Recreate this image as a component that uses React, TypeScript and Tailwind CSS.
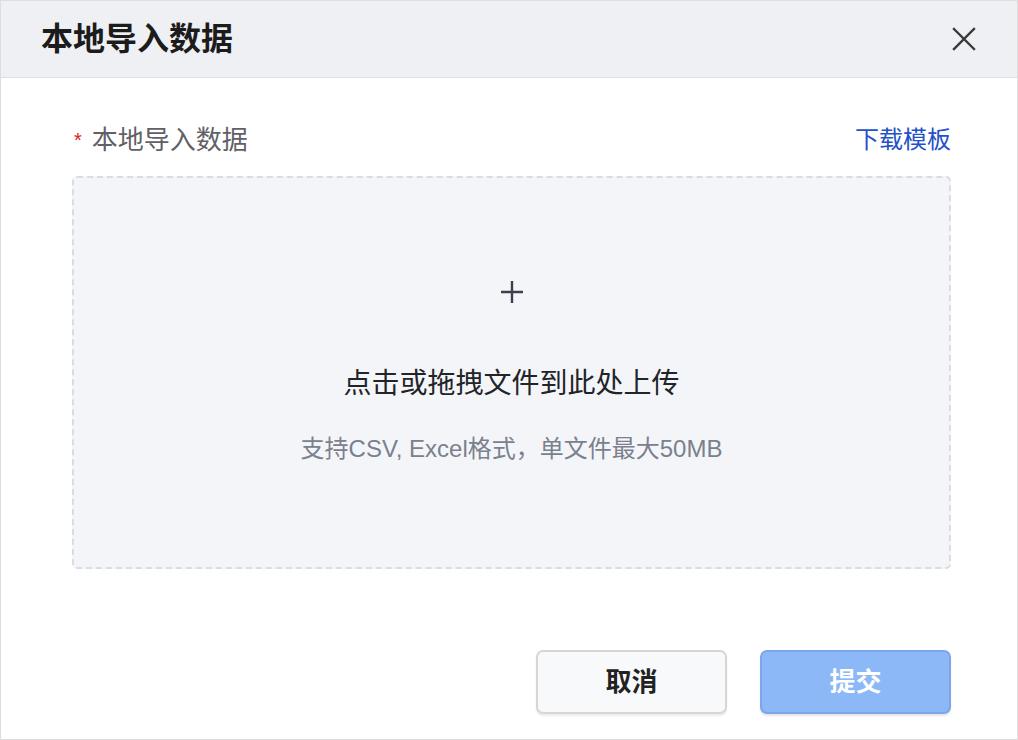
const font = { fontFamily: '"Liberation Sans", "Noto Sans CJK SC", sans-serif' };

export default function App() {
  return (
    <div
      className="w-[1018px] h-[740px] bg-white border border-[#dedede] flex flex-col"
      style={font}
    >
      {/* HEADER */}
      <div className="h-[77px] shrink-0 flex items-center justify-between pl-[40px] pr-[40px] bg-[#eef0f3] border-b border-[#dcdfe4]">
        <h1 className="text-[32px] font-semibold text-[#1c1c1c] leading-none">本地导入数据</h1>
        <button className="w-[26px] h-[26px] flex items-center justify-center text-[#3a3a3a]">
          <svg width="24" height="24" viewBox="0 0 24 24" fill="none" stroke="currentColor" strokeWidth="2.4" strokeLinecap="square">
            <path d="M2 2 L22 22 M22 2 L2 22" />
          </svg>
        </button>
      </div>

      {/* BODY */}
      <div className="flex-1 flex flex-col pl-[71px] pr-[66px] pt-[44px]">
        <div className="flex items-center justify-between h-[36px]">
          <div className="flex items-center pl-[2px]">
            <span className="text-[#e02020] text-[20px] mr-[10px] leading-none">*</span>
            <span className="text-[26px] text-[#5f6166] leading-none">本地导入数据</span>
          </div>
          <a href="#" className="text-[24px] text-[#2451c9] leading-none">下载模板</a>
        </div>

        {/* DROP ZONE */}
        <div className="mt-[18px] h-[393px] rounded-[5px] border-2 border-dashed border-[#d9dce3] bg-[#f4f5f9] flex flex-col items-center">
          <svg className="mt-[102px] text-[#3a414d]" width="24" height="24" viewBox="0 0 24 24" fill="none" stroke="currentColor" strokeWidth="2.4">
            <path d="M12 1 V23 M1 12 H23" />
          </svg>
          <div className="mt-[66px] text-[28px] text-[#222428] leading-none">点击或拖拽文件到此处上传</div>
          <div className="mt-[39px] text-[24px] text-[#7a818d] leading-none">支持CSV, Excel格式，单文件最大50MB</div>
        </div>

        {/* FOOTER */}
        <div className="mt-[81px] flex justify-end gap-[33px]">
          <button className="w-[191px] h-[64px] rounded-[7px] border-2 border-[#d6d6d6] bg-[#f8f9fa] shadow-[0_2px_2px_rgba(0,0,0,0.08)] text-[26px] font-semibold text-[#222]">
            取消
          </button>
          <button className="w-[191px] h-[64px] rounded-[7px] border-2 border-[#7ba7ea] bg-[#8cb8f8] shadow-[0_2px_2px_rgba(0,0,0,0.1)] text-[26px] font-semibold text-white">
            提交
          </button>
        </div>
      </div>
    </div>
  );
}
